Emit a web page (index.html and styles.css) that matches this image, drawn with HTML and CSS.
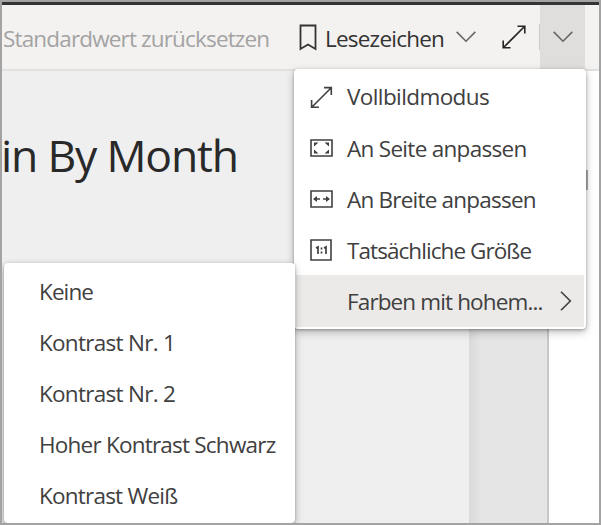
FILE: index.html
```html
<!DOCTYPE html>
<html lang="de">
<head>
<meta charset="utf-8">
<title>Bericht</title>
<link rel="stylesheet" href="styles.css">
</head>
<body>
<div class="app">
  <header class="toolbar">
    <span class="reset">Standardwert zurücksetzen</span>
    <svg class="bookmark" width="18" height="27" viewBox="0 0 18 27"><path d="M1.5 1.5h15v23.5L9 20.500 1.500 25z"/></svg>
    <span class="bookmarks">Lesezeichen</span>
    <svg class="chevron" width="20" height="12" viewBox="0 0 20 12"><path d="M.7.9 10 10.2 19.3.9"/></svg>
    <svg class="expand" width="24" height="24" viewBox="0 0 24 24"><path d="M1.5 22.5 22.5 1.5M15.500 1.200h7.300v7.300M1.200 15.500v7.300h7.300"/></svg>
    <span class="divider"></span>
    <button class="view-button" aria-expanded="true"><svg class="chevron" width="20" height="12" viewBox="0 0 20 12"><path d="M.7.9 10 10.2 19.3.9"/></svg></button>
  </header>
  <main class="workspace">
    <section class="page"><h1>in By Month</h1></section>
    <div class="gutter"></div>
    <aside class="pane"><span class="handle"></span></aside>
  </main>
  <nav class="menu view-menu">
    <div class="item">
      <svg width="23" height="23" viewBox="0 0 23 23"><path d="M2 21 21 2M14 1.600h7.300v7.300M1.600 14v7.300h7.300"/></svg>
      <span class="full">Vollbildmodus</span>
    </div>
    <div class="item">
      <svg width="23" height="23" viewBox="0 0 23 23"><path d="M1 3h21v16H1z"/><path class="solid" d="M4 5.500h4.500L4 9.500zM19 5.500h-4.500l4.500 4zM4 16.500h4.500L4 12.500zM19 16.500h-4.500l4.500-4z"/></svg>
      <span class="fit-page">An Seite anpassen</span>
    </div>
    <div class="item">
      <svg width="23" height="23" viewBox="0 0 23 23"><path d="M1 3h21v16H1z"/><path d="M4 11h6M13 11h6"/><path class="solid" d="M3 11 7 8v6zM20 11l-4-3v6z"/></svg>
      <span class="fit-width">An Breite anpassen</span>
    </div>
    <div class="item">
      <svg width="23" height="23" viewBox="0 0 23 23"><path d="M1 1h20v20H1z"/><path class="ratio" d="M6 9 8 8v7M14 9 16 8v7M11.500 8.500v2M11.500 12.500v2"/></svg>
      <span class="actual">Tatsächliche Größe</span>
    </div>
    <div class="item selected">
      <span class="blank"></span>
      <span class="colors">Farben mit hohem...</span>
      <svg class="more" width="12" height="20" viewBox="0 0 12 20"><path d="m1 .8 9.300 9.200L1 19.200"/></svg>
    </div>
  </nav>
  <nav class="menu contrast-menu">
    <div class="item"><span class="none">Keine</span></div>
    <div class="item"><span class="numbered">Kontrast Nr. 1</span></div>
    <div class="item"><span class="numbered">Kontrast Nr. 2</span></div>
    <div class="item"><span class="black">Hoher Kontrast Schwarz</span></div>
    <div class="item"><span class="white">Kontrast Weiß</span></div>
  </nav>
</div>
</body>
</html>
```
FILE: styles.css
```css
* { box-sizing: border-box; }
body { margin: 0; overflow: hidden; }
.app {
  position: relative;
  display: flex;
  flex-direction: column;
  width: 601px;
  height: 525px;
  border: 2px solid #a3a3a3;
  overflow: hidden;
  background: #fff;
  color: #404040;
  font: 22.5px/30px "Open Sans", "Noto Sans", sans-serif;
  letter-spacing: -.78px;
}
svg { display: block; flex: none; fill: none; stroke: #404040; stroke-width: 1.6; }
span { white-space: nowrap; }
.toolbar {
  display: flex;
  align-items: center;
  flex: none;
  height: 69px;
  border-top: 3px solid #343434;
  border-bottom: 2px solid #e0e0e0;
  background: #f3f2f1;
}
.reset { width: 297px; padding: 4px 0 0 1px; color: #a3a3a3; letter-spacing: -.84px; }
.bookmark { stroke: #333; stroke-width: 1.8; }
.bookmarks { width: 139px; padding: 4px 0 0 8px; color: #333; }
.toolbar .chevron { stroke: #666; stroke-width: 1.6; }
.expand { margin: 0 13px 0 26px; stroke: #252423; }
.divider { width: 1px; height: 26px; background: #ccc; }
.view-button {
  display: flex;
  align-items: center;
  justify-content: center;
  width: 45px;
  height: 64px;
  padding: 0;
  border: 0;
  background: #dfdedd;
}
.workspace { display: flex; flex: 1; }
.page { width: 467px; background: #efefef; }
h1 {
  margin: 51px 0 0 -1px;
  color: #292929;
  font-size: 44.5px;
  font-weight: 400;
  line-height: 66px;
  letter-spacing: -1.2px;
}
.gutter { width: 80px; border-right: 2px solid #c7c7c7; background: linear-gradient(90deg, #d9d9d9, #e5e5e5 12px); }
.pane { flex: 1; background: #fff; }
.handle { display: block; width: 2px; height: 20px; margin: 99px 0 0 37px; background: #aaa; }
.menu {
  position: absolute;
  background: #fff;
  border-radius: 4px;
  box-shadow: 0 3px 9px #0004, 0 1px 3px #0004;
}
.view-menu { left: 292px; top: 67px; width: 292px; height: 260px; padding: 2px; }
.contrast-menu { left: 2px; top: 261px; width: 291px; height: 260px; padding: 2px 2px 3px; }
.item { display: flex; align-items: center; height: 51px; padding-left: 14px; }
.item span { padding-top: 2px; }
.item svg:first-child { margin-top: 2px; }
.view-menu svg + span, .blank + span { margin-left: 14px; }
.item .full { padding-top: 0; letter-spacing: -.6px; }
.fit-page { letter-spacing: -.7px; }
.actual { letter-spacing: -.93px; }
.colors { letter-spacing: -.87px; }
.none { letter-spacing: -.9px; }
.numbered { letter-spacing: -.72px; }
.blank { width: 23px; }
.selected { height: 52px; background: #ebeae9; }
.more { margin: 0 12px 0 auto; }
.contrast-menu .item { padding-left: 33px; }
.solid { fill: #404040; stroke: none; }
.ratio { stroke-width: 1.7; }
```
